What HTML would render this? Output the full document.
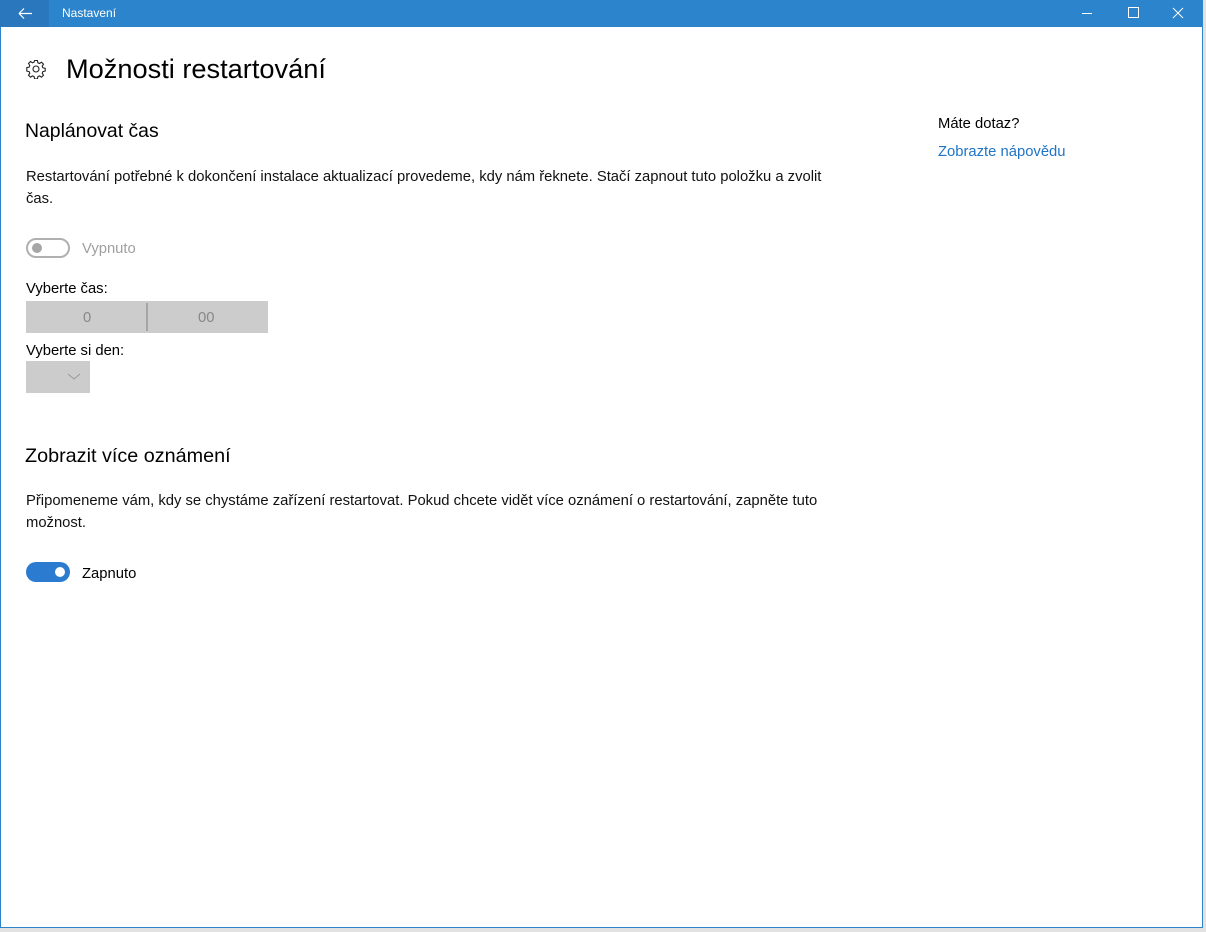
<!DOCTYPE html>
<html><head><meta charset="utf-8"><style>
html,body{margin:0;padding:0;}
body{width:1206px;height:932px;background:#e2e2e2;position:relative;overflow:hidden;font-family:"Liberation Sans",sans-serif;color:#000;}
.win{position:absolute;left:0;top:0;width:1201px;height:927px;border:1px solid #2b84cc;border-top:none;background:#fff;}
.tb{position:absolute;left:0;top:0;width:1203px;height:27px;background:#2b84cc;}
.back{position:absolute;left:0;top:0;width:49px;height:27px;background:#2a77bd;}
.t{position:absolute;white-space:nowrap;}
.sm{font-size:14.8px;}
</style></head><body>
<div class="win"></div>
<div class="tb">
 <div class="back"><svg width="49" height="27"><path d="M19 13.5h13M19 13.5l5-5M19 13.5l5 5" stroke="#fff" stroke-width="1.2" fill="none"/></svg></div>
 <div class="t" style="left:62px;top:6px;color:#fff;font-size:12px;">Nastavení</div>
 <svg style="position:absolute;left:1070px;top:0" width="136" height="27">
  <path d="M12 13.5h10" stroke="#fff"/>
  <rect x="58.5" y="7.5" width="10" height="10" fill="none" stroke="#fff"/>
  <path d="M103 8l10 10M113 8l-10 10" stroke="#fff"/>
 </svg>
</div>
<svg style="position:absolute;left:26px;top:59px" width="20" height="20" viewBox="0 0 20 20"><g fill="none" stroke="#222" stroke-width="1.1"><circle cx="10" cy="10" r="3"/><path d="M8.6 1.5h2.8l.5 2.3 1.6.7 2-1.3 2 2-1.3 2 .7 1.6 2.3.5v2.8l-2.3.5-.7 1.6 1.3 2-2 2-2-1.3-1.6.7-.5 2.3H8.6l-.5-2.3-1.6-.7-2 1.3-2-2 1.3-2-.7-1.6-2.3-.5V8.6l2.3-.5.7-1.6-1.3-2 2-2 2 1.3 1.6-.7z"/></g></svg>
<div class="t" style="left:66px;top:53px;font-size:27.2px;color:#000;">Možnosti restartování</div>
<div class="t" style="left:25px;top:120px;font-size:19.4px;">Naplánovat čas</div>
<div class="t sm" style="left:26px;top:166px;line-height:22px;color:#111;">Restartování potřebné k dokončení instalace aktualizací provedeme, kdy nám řeknete. Stačí zapnout tuto položku a zvolit<br>čas.</div>
<div style="position:absolute;left:26px;top:238px;width:40px;height:16px;border:2px solid #b0b0b0;border-radius:10px;"></div>
<div style="position:absolute;left:32px;top:243px;width:10px;height:10px;border-radius:50%;background:#a6a6a6;"></div>
<div class="t sm" style="left:82px;top:241px;color:#a0a0a0;">Vypnuto</div>
<div class="t sm" style="left:26px;top:281px;">Vyberte čas:</div>
<div style="position:absolute;left:26px;top:301px;width:242px;height:32px;background:#cccccc;"></div>
<div style="position:absolute;left:146px;top:303px;width:2px;height:28px;background:#a5a5a5;"></div>
<div class="t sm" style="left:83px;top:310px;color:#888;">0</div>
<div class="t sm" style="left:198px;top:310px;color:#888;">00</div>
<div class="t sm" style="left:26px;top:343px;">Vyberte si den:</div>
<div style="position:absolute;left:26px;top:361px;width:64px;height:32px;background:#cccccc;"></div>
<svg style="position:absolute;left:66px;top:370px" width="16" height="12"><path d="M2 4l6 5 6-5" stroke="#999" fill="none"/></svg>
<div class="t" style="left:25px;top:445px;font-size:19.8px;">Zobrazit více oznámení</div>
<div class="t sm" style="left:26px;top:490px;line-height:22px;color:#111;">Připomeneme vám, kdy se chystáme zařízení restartovat. Pokud chcete vidět více oznámení o restartování, zapněte tuto<br>možnost.</div>
<div style="position:absolute;left:26px;top:562px;width:44px;height:20px;border-radius:10px;background:#2b7cd0;"></div>
<div style="position:absolute;left:55px;top:567px;width:10px;height:10px;border-radius:50%;background:#fff;"></div>
<div class="t sm" style="left:82px;top:566px;">Zapnuto</div>
<div class="t sm" style="left:938px;top:116px;">Máte dotaz?</div>
<div class="t sm" style="left:938px;top:144px;color:#1e74c6;">Zobrazte nápovědu</div>
</body></html>
